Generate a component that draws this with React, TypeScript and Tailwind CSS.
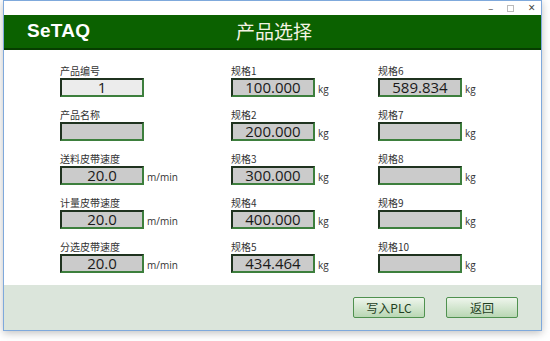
import React from 'react';

const cjk = { fontFamily: '"Microsoft YaHei", "Noto Sans CJK SC", "Noto Sans", sans-serif' };
const num = { fontFamily: '"Open Sans", "Liberation Sans", sans-serif' };

interface FieldProps {
  label: string;
  value?: string;
  unit?: string;
  light?: boolean;
}

const Field: React.FC<FieldProps> = ({ label, value, unit, light }) => (
  <div className="flex flex-col">
    <div className="mb-[1px] h-[13px] text-[10px] leading-[13px] text-[#333]" style={cjk}>
      {label}
    </div>
    <div className="flex items-center">
      <div
        className={`flex h-[19px] w-[84px] items-center justify-center border-2 border-t-[#1f321f] border-l-[#1f321f] border-r-[#3d7f3d] border-b-[#3d7f3d] text-[15px] leading-none text-[#1a1a1a] ${
          light ? 'bg-[#ececec]' : 'bg-[#cbcbcb]'
        }`}
        style={num}
      >
        {value}
      </div>
      {unit && (
        <span className="ml-[3px] mt-[3px] text-[10px] leading-none text-[#333]" style={num}>
          {unit}
        </span>
      )}
    </div>
  </div>
);

const App: React.FC = () => {
  const col1: FieldProps[] = [
    { label: '产品编号', value: '1', light: true },
    { label: '产品名称' },
    { label: '送料皮带速度', value: '20.0', unit: 'm/min' },
    { label: '计量皮带速度', value: '20.0', unit: 'm/min' },
    { label: '分选皮带速度', value: '20.0', unit: 'm/min' },
  ];
  const col2: FieldProps[] = [
    { label: '规格1', value: '100.000', unit: 'kg' },
    { label: '规格2', value: '200.000', unit: 'kg' },
    { label: '规格3', value: '300.000', unit: 'kg' },
    { label: '规格4', value: '400.000', unit: 'kg' },
    { label: '规格5', value: '434.464', unit: 'kg' },
  ];
  const col3: FieldProps[] = [
    { label: '规格6', value: '589.834', unit: 'kg' },
    { label: '规格7', unit: 'kg' },
    { label: '规格8', unit: 'kg' },
    { label: '规格9', unit: 'kg' },
    { label: '规格10', unit: 'kg' },
  ];

  return (
    <div className="h-[341px] w-[550px] overflow-hidden bg-white">
      <div className="ml-[3px] flex h-[331px] w-[539px] flex-col border border-[#7fa9dc] bg-white shadow-[0_2px_8px_rgba(0,0,0,0.25)]">
        {/* title bar */}
        <div className="flex h-[14px] items-center justify-end gap-[14px] pr-[6px] text-[10px] leading-none text-[#444]">
          <span className="text-[#777]">–</span>
          <span className="inline-block h-[7px] w-[7px] border border-[#bbb]" />
          <span className="text-[12px]">×</span>
        </div>

        {/* header */}
        <div className="flex h-[35px] items-center border-b-2 border-[#063d00] bg-[#0b6100]">
          <div
            className="ml-[23px] w-[209px] text-[19px] font-black tracking-[0.3px] text-white"
            style={{ fontFamily: '"Liberation Sans", Arial, sans-serif' }}
          >
            SeTAQ
          </div>
          <div className="text-[19px] text-[#f4f4e4]" style={cjk}>
            产品选择
          </div>
        </div>

        {/* content */}
        <div className="flex flex-1 pl-[56px] pt-[14px]">
          <div className="flex w-[171px] flex-col gap-[11px]">
            {col1.map((f) => (
              <Field key={f.label} {...f} />
            ))}
          </div>
          <div className="flex w-[147px] flex-col gap-[11px]">
            {col2.map((f) => (
              <Field key={f.label} {...f} />
            ))}
          </div>
          <div className="flex flex-col gap-[11px]">
            {col3.map((f) => (
              <Field key={f.label} {...f} />
            ))}
          </div>
        </div>

        {/* footer */}
        <div className="flex h-[45px] items-center justify-end gap-[21px] bg-[#dbe5db] pr-[23px]">
          {['写入PLC', '返回'].map((t) => (
            <button
              key={t}
              className="h-[21px] w-[72px] rounded-[2px] border border-[#4f914f] bg-gradient-to-b from-[#eef5ec] to-[#b9d7b4] text-[12px] leading-none text-[#1f3f1f]"
              style={cjk}
            >
              {t}
            </button>
          ))}
        </div>
      </div>
    </div>
  );
};

export default App;
